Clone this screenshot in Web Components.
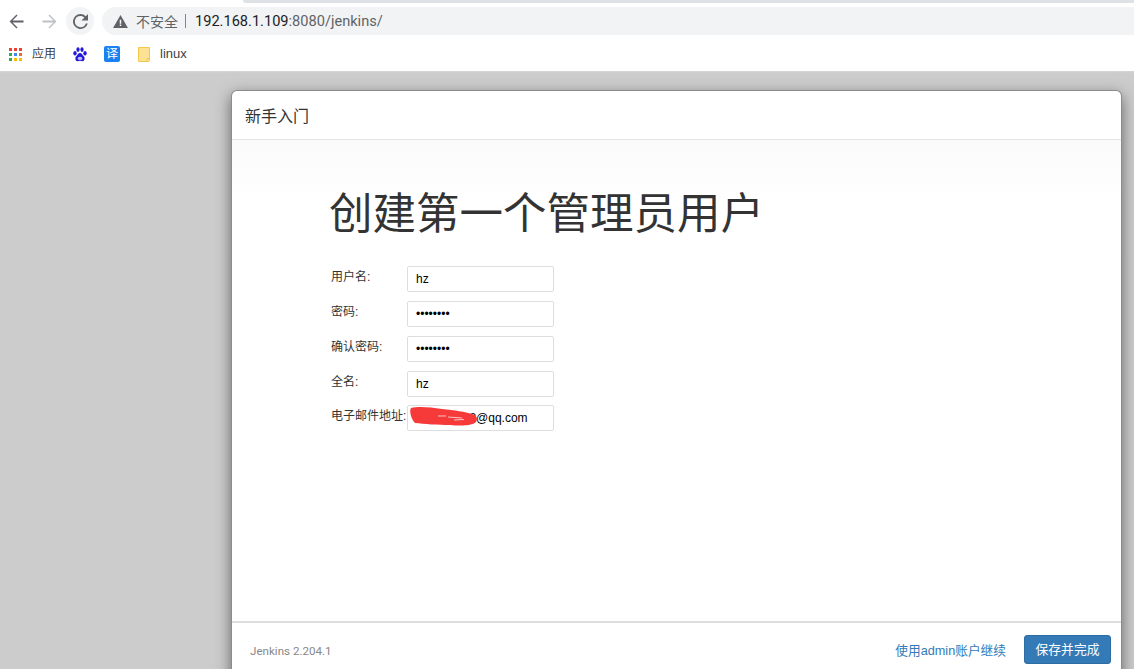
<!DOCTYPE html>
<html lang="zh-CN">
<head>
<meta charset="utf-8">
<title>Jenkins</title>
<style>
    html, body { margin: 0; height: 100%; overflow: hidden; background: #ccc; }
    body { font-family: "Liberation Sans", "Noto Sans CJK SC", sans-serif; }
</style>
</head>
<body>
<browser-window>
    <setup-card>
        <span slot="title">新手入门</span>
        <h1-title>创建第一个管理员用户</h1-title>
        <form-row label="用户名:">hz</form-row>
        <form-row label="密码:" secret>••••••••</form-row>
        <form-row label="确认密码:" secret>••••••••</form-row>
        <form-row label="全名:">hz</form-row>
        <form-row label="电子邮件地址:" scribble tight>000000008@qq.com</form-row>
        <span slot="version">Jenkins 2.204.1</span>
        <a slot="actions" class="skip">使用admin账户继续</a>
        <setup-button slot="actions">保存并完成</setup-button>
    </setup-card>
</browser-window>

<script>
const CJK = '"Liberation Sans", "Noto Sans CJK SC", sans-serif';

class BrowserWindow extends HTMLElement {
    constructor() {
        super();
        const shadowRoot = this.attachShadow({ mode: "open" });
        shadowRoot.innerHTML = `
            <style>
                :host { display: flex; flex-direction: column; height: 669px; overflow: hidden; font-family: ${CJK}; }
                .chrome { flex: none; height: 71px; background: #fff; display: flex; flex-direction: column; }
                .tabs { height: 3px; margin-left: 243px; background: #dee1e6; border-bottom-left-radius: 6px; }
                .toolbar { display: flex; align-items: center; height: 28px; margin-top: 4px; padding-left: 6px; }
                .nav { flex: none; width: 20px; height: 28px; display: flex; align-items: center; justify-content: center; }
                .forward { margin-left: 13px; }
                .reload { flex: none; width: 28px; height: 28px; margin-left: 7px; border-radius: 50%; background: #f1f3f4; display: flex; align-items: center; justify-content: center; }
                .omnibox { flex: 1; margin-left: 8px; height: 28px; border-radius: 14px 0 0 14px; background: #f1f3f4; display: flex; align-items: center; padding-left: 11px; font-size: 14px; }
                .insecure { color: #5f6368; margin-left: 8px; }
                .sep { width: 1px; height: 14px; background: #80868b; margin: 0 9px 0 7px; }
                .host { color: #202124; font-family: Roboto, sans-serif; font-size: 14.6px; }
                .path { color: #5f6368; font-family: Roboto, sans-serif; font-size: 14.6px; }
                .bookmarks { display: flex; align-items: center; height: 24px; margin-top: 7px; padding-left: 9px; font-size: 12px; color: #3c4043; }
                .bookmarks span { line-height: 16px; }
                .apps { display: grid; grid-template-columns: repeat(3, 3px); grid-auto-rows: 3px; gap: 2px; margin-right: 10px; }
                .apps i { display: block; }
                .paw { margin-left: 17px; }
                .tr { margin-left: 17px; width: 16px; height: 16px; border-radius: 2px; background: #1a82f0; color: #fff; font-size: 12px; line-height: 16px; text-align: center; }
                .folder { margin-left: 18px; margin-right: 10px; }
                .linux { font-size: 13px; }
                .backdrop { flex: 1; min-height: 0; background: linear-gradient(#d6d6d6, #ccc 2px); padding: 19px 12px 0 231px; }
            </style>
            <div class="chrome">
                <div class="tabs"></div>
                <div class="toolbar">
                    <div class="nav">
                        <svg width="15" height="15" viewBox="0 0 16 16"><path d="M15.500 7H3.800l5.300-5.300L8 .6.6 8 8 15.400l1.100-1.100L3.800 9h11.700z" fill="#5f6368"/></svg>
                    </div>
                    <div class="nav forward">
                        <svg width="15" height="15" viewBox="0 0 16 16"><path d="M.5 7h11.700L6.900 1.700 8 .6 15.400 8 8 15.400l-1.100-1.100L12.200 9H.5z" fill="#bdc1c6"/></svg>
                    </div>
                    <div class="reload">
                        <svg width="15" height="15" viewBox="0 0 16 16"><path d="M13.65 2.35A7.95 7.95 0 0 0 8 0a8 8 0 1 0 7.74 10h-2.08A6 6 0 1 1 8 2c1.66 0 3.14.69 4.22 1.78L9 7h7V0z" fill="#5f6368"/></svg>
                    </div>
                    <div class="omnibox">
                        <svg width="15" height="13" viewBox="0 0 16 14"><path d="M8 0 0 14h16z" fill="#5f6368"/><path d="M7.200 5h1.600v4.400H7.200zM7.200 10.300h1.600v1.600H7.200z" fill="#fff"/></svg>
                        <span class="insecure">不安全</span>
                        <span class="sep"></span>
                        <span class="host">192.168.1.109</span><span class="path">:8080/jenkins/</span>
                    </div>
                </div>
                <div class="bookmarks">
                    <div class="apps">
                        <i style="background:#ea4335"></i><i style="background:#ea4335"></i><i style="background:#ea4335"></i>
                        <i style="background:#34a853"></i><i style="background:#4285f4"></i><i style="background:#ea6a35"></i>
                        <i style="background:#34a853"></i><i style="background:#fbbc04"></i><i style="background:#fbbc04"></i>
                    </div>
                    <span>应用</span>
                    <svg class="paw" width="14" height="15" viewBox="0 0 14 15" fill="#2319dc">
                        <ellipse cx="2" cy="6.200" rx="1.700" ry="2.200"/><ellipse cx="5" cy="2.600" rx="1.600" ry="2.300"/>
                        <ellipse cx="9" cy="2.600" rx="1.600" ry="2.300"/><ellipse cx="12" cy="6.200" rx="1.700" ry="2.200"/>
                        <path d="M7 6C5 6 4.600 8 3.300 9.200 1.800 10.600 2 14.500 5 14.200c1-.1 1.300-.4 2-.4s1 .3 2 .4c3 .3 3.200-3.600 1.700-5C9.400 8 9 6 7 6z"/>
                        <ellipse cx="7" cy="11.400" rx="2.300" ry="1.600" fill="#b9bdf5"/>
                    </svg>
                    <span class="tr">译</span>
                    <svg class="folder" width="12" height="15" viewBox="0 0 12 15"><path d="M.5.5h11v13.200l-.8.800H.5z" fill="#fde293" stroke="#f0c94c"/><path d="M9 14v-2.500h2.500" fill="none" stroke="#f0c94c"/></svg>
                    <span class="linux">linux</span>
                </div>
            </div>
            <div class="backdrop"><slot></slot></div>
        `;
    }
}

class SetupCard extends HTMLElement {
    constructor() {
        super();
        const shadowRoot = this.attachShadow({ mode: "open" });
        shadowRoot.innerHTML = `
            <style>
                :host { display: flex; flex-direction: column; height: 591px; box-sizing: border-box; background: #fff; border: 1px solid rgba(0,0,0,.45); border-bottom: 0; border-radius: 6px 6px 0 0; box-shadow: 0 5px 15px rgba(0,0,0,.5); }
                header { flex: none; height: 49px; box-sizing: border-box; border-bottom: 1px solid #e5e5e5; padding-left: 13px; display: flex; align-items: center; font-size: 16px; color: #333; }
                main { flex: 1; min-height: 0; background: linear-gradient(#fafafa, #fff 60px); padding: 43px 0 0 98px; display: flex; flex-direction: column; }
                footer { flex: none; height: 60px; box-sizing: border-box; border-top: 2px solid #ddd; padding: 12px 10px 0 18px; display: flex; justify-content: space-between; align-items: flex-start; font-size: 11.6px; color: #888; }
                .version { line-height: 29px; margin-top: 2px; font-family: Roboto, sans-serif; }
                .actions { display: flex; align-items: center; gap: 18px; }
                ::slotted(.skip) { color: #337ab7; font-size: 12.7px; }
            </style>
            <header><slot name="title"></slot></header>
            <main><slot></slot></main>
            <footer>
                <span class="version"><slot name="version"></slot></span>
                <div class="actions"><slot name="actions"></slot></div>
            </footer>
        `;
    }
}

class H1Title extends HTMLElement {
    constructor() {
        super();
        const shadowRoot = this.attachShadow({ mode: "open" });
        shadowRoot.innerHTML = `
            <style>
                :host { display: block; font-size: 43.5px; font-weight: 400; line-height: 62px; color: #333; margin: 0 0 21px -1px; }
            </style>
            <slot></slot>
        `;
    }
}

class FormRow extends HTMLElement {
    constructor() {
        super();
        const shadowRoot = this.attachShadow({ mode: "open" });
        shadowRoot.innerHTML = `
            <style>
                :host { display: flex; align-items: flex-start; height: 35px; font-size: 12px; color: #333; }
                :host([tight]) { margin-top: -1px; }
                .label { width: 76px; margin-left: 1px; line-height: 22px; white-space: nowrap; }
                .field { position: relative; width: 147px; height: 26px; box-sizing: border-box; border: 1px solid #ddd; border-radius: 2px; background: #fff; padding-left: 8px; line-height: 25px; color: #000; white-space: nowrap; overflow: hidden; }
                .ink { position: absolute; left: 2px; top: 0; }
                .ink:not([data-on]) { display: none; }
            </style>
            <span class="label"></span>
            <div class="field">
                <slot></slot>
                <svg class="ink" width="72" height="24" viewBox="0 0 72 24">
                    <path d="M1 2C8 0 20 1 32 3 45 4 55 6 62 8 67 9 68 13 66 16 62 20 50 20 40 19 28 19 14 18 5 17 1 13-1 5 1 2z" fill="#f63a3a"/>
                    <path d="M28 10h8M38 11l14 1M44 14l10-.5" stroke="#f8c4c4" stroke-width="1" fill="none"/>
                </svg>
            </div>
        `;
        shadowRoot.querySelector(".label").textContent = this.getAttribute("label");
        shadowRoot.querySelector(".ink").toggleAttribute("data-on", this.hasAttribute("scribble"));
    }
}

class SetupButton extends HTMLElement {
    constructor() {
        super();
        const shadowRoot = this.attachShadow({ mode: "open" });
        shadowRoot.innerHTML = `
            <style>
                :host { display: block; width: 87px; height: 29px; box-sizing: border-box; border: 1px solid #2e6da4; border-radius: 3px; background: #337ab7; color: #fff; font-size: 12.8px; line-height: 28px; text-align: center; }
            </style>
            <slot></slot>
        `;
    }
}

window.customElements.define("browser-window", BrowserWindow);
window.customElements.define("setup-card", SetupCard);
window.customElements.define("h1-title", H1Title);
window.customElements.define("form-row", FormRow);
window.customElements.define("setup-button", SetupButton);
</script>
</body>
</html>
